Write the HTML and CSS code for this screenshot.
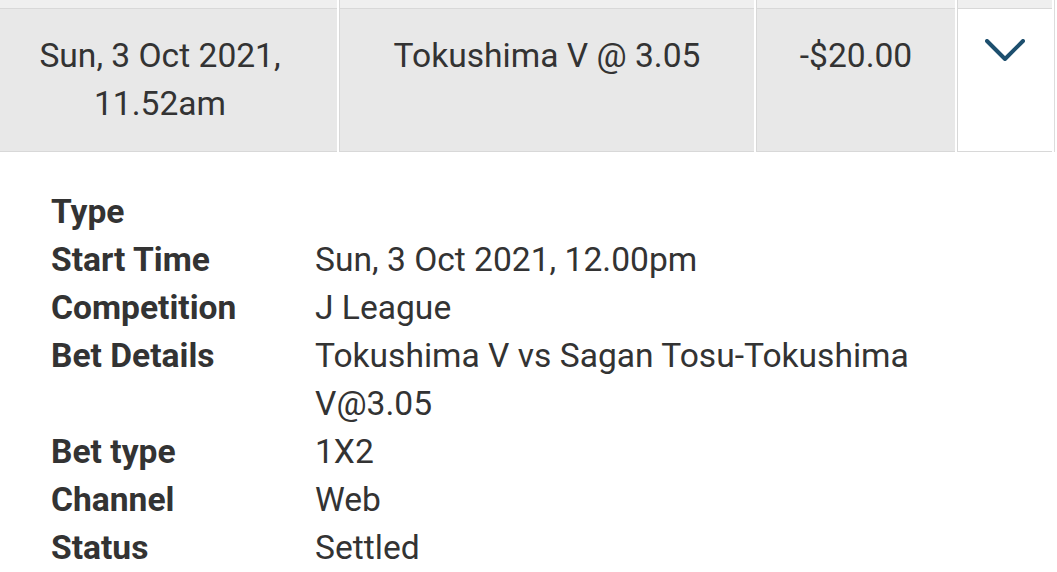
FILE: index.html
```html
<html>
  <head>
    <meta name="viewport" content="width=device-width, initial-scale=1.0">
    <title>Bet History</title>
    <link rel="stylesheet" href="styles.css">
  </head>
  <body>
    <div class="bets">
      <div class="bet-row prev">
        <div class="cell"></div>
        <div class="cell"></div>
        <div class="cell"></div>
        <div class="cell"></div>
      </div>
      <div class="bet-row open">
        <div class="cell date">Sun, 3 Oct 2021,<br>11.52am</div>
        <div class="cell">Tokushima V @ 3.05</div>
        <div class="cell">-$20.00</div>
        <div class="cell toggle">
          <svg viewBox="0 0 40 22" width="40" height="22">
            <path d="M2 2 L20 20 L38 2" fill="none" stroke="#1d4f6e" stroke-width="4" stroke-linecap="round" stroke-linejoin="round"/>
          </svg>
        </div>
      </div>
    </div>

    <div class="details">
      <div class="label">Type</div><div class="value"></div>
      <div class="label">Start Time</div><div class="value">Sun, 3 Oct 2021, 12.00pm</div>
      <div class="label">Competition</div><div class="value">J League</div>
      <div class="label">Bet Details</div><div class="value">Tokushima V vs Sagan Tosu-Tokushima V@3.05</div>
      <div class="label">Bet type</div><div class="value">1X2</div>
      <div class="label">Channel</div><div class="value">Web</div>
      <div class="label">Status</div><div class="value">Settled</div>
    </div>
  </body>
</html>
```

FILE: styles.css
```css
  html {
    height: 100%;
  }
  body {
    margin: 0;
    font-family: Roboto, "Liberation Sans", sans-serif;
    color: #333;
    background: white;
    overflow: hidden;
  }
  .bets {
    width: 1054px;
    border-right: 1px solid #dcdcdc;
  }
  .bet-row {
    display: grid;
    grid-template-columns: 337px 415px 199px 95px;
    column-gap: 2px;
  }
  .cell {
    box-sizing: border-box;
    background-color: #e8e8e8;
    border-left: 1px solid #d8d8d8;
    border-bottom: 1px solid #d8d8d8;
    font-size: 33.6px;
    line-height: 48px;
    text-align: center;
    padding: 23px 0 23px;
  }
  .bet-row .cell:first-child {
    border-left: none;
    padding-right: 17px;
  }
  .prev .cell {
    height: 9px;
    padding: 0;
    background-color: #efefef;
  }
  .open .toggle {
    background-color: white;
    padding: 30px 0 0;
    line-height: 0;
  }
  .details {
    display: grid;
    grid-template-columns: 264px 630px;
    padding: 36px 0 0 51px;
    font-size: 33.6px;
    line-height: 48px;
  }
  .label {
    font-weight: bold;
  }
```
